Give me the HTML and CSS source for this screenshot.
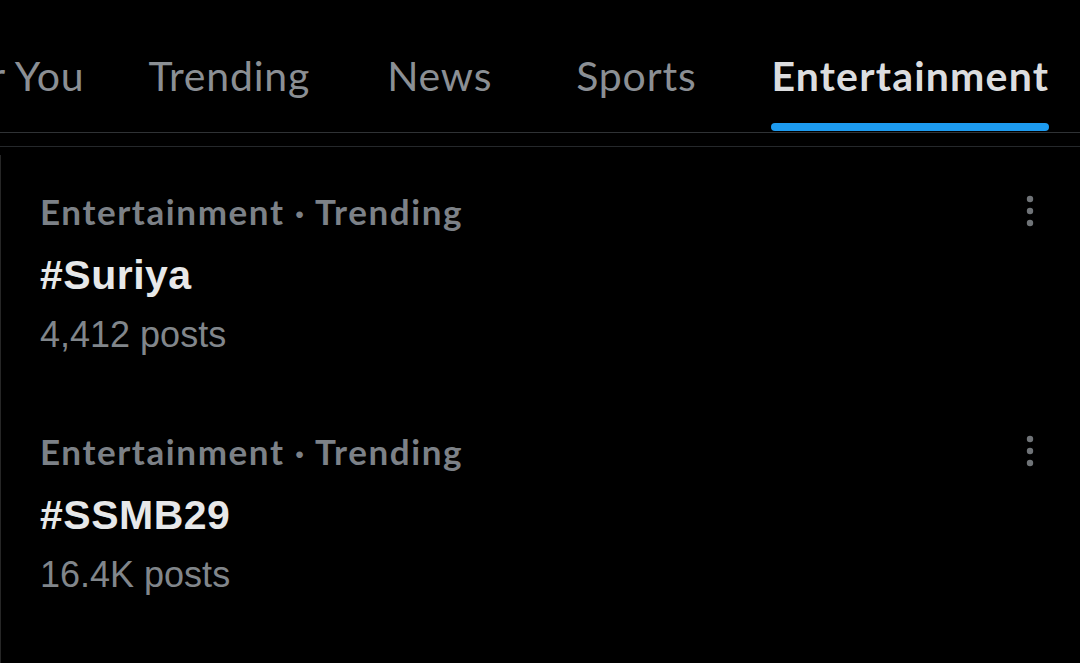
FILE: index.html
```html
<!DOCTYPE html>
<html>
<head>
<meta charset="utf-8">
<link rel="stylesheet" href="styles.css">
</head>
<body>
<div class="page">
  <nav class="tabs">
    <div class="tab-strip">
      <div class="tab tab-foryou"><span class="tab-label">For You</span></div>
      <div class="tab tab-trending"><span class="tab-label">Trending</span></div>
      <div class="tab tab-news"><span class="tab-label">News</span></div>
      <div class="tab tab-sports"><span class="tab-label">Sports</span></div>
      <div class="tab tab-ent active"><span class="tab-label">Entertainment</span><span class="indicator"></span></div>
    </div>
  </nav>
  <div class="sub-rule"></div>
  <section class="list">
    <article class="trend">
      <div class="trend-body">
        <div class="trend-meta">Entertainment · Trending</div>
        <div class="trend-title">#Suriya</div>
        <div class="trend-count">4,412 posts</div>
      </div>
      <svg class="more" viewBox="0 0 8 40" width="8" height="40"><circle cx="4" cy="8" r="3.2"/><circle cx="4" cy="20" r="3.2"/><circle cx="4" cy="32" r="3.2"/></svg>
    </article>
    <article class="trend">
      <div class="trend-body">
        <div class="trend-meta">Entertainment · Trending</div>
        <div class="trend-title">#SSMB29</div>
        <div class="trend-count">16.4K posts</div>
      </div>
      <svg class="more" viewBox="0 0 8 40" width="8" height="40"><circle cx="4" cy="8" r="3.2"/><circle cx="4" cy="20" r="3.2"/><circle cx="4" cy="32" r="3.2"/></svg>
    </article>
  </section>
</div>
</body>
</html>
```

FILE: styles.css
```css
html, body {
  margin: 0;
  padding: 0;
  background: #000;
}
.page {
  width: 1080px;
  height: 663px;
  overflow: hidden;
  background: #000;
  display: flex;
  flex-direction: column;
}
.tabs {
  flex: none;
  height: 132px;
  border-bottom: 1px solid #2f3235;
  overflow: hidden;
}
.tab-strip {
  display: flex;
  margin-left: -59px;
  height: 132px;
}
.tab {
  display: flex;
  flex-direction: column;
  align-items: stretch;
  padding: 52px 3px 0;
  font-family: Lato, "Liberation Sans", sans-serif;
  font-size: 41px;
  letter-spacing: 0.8px;
  line-height: 48px;
  color: #8b8f94;
  white-space: nowrap;
}
.tab-trending { margin-left: 58px; }
.tab-news { margin-left: 71px; }
.tab-sports { margin-left: 78px; }
.tab-ent { margin-left: 69px; }
.tab.active {
  color: #dcdddf;
  font-weight: 700;
  letter-spacing: 1.2px;
}
.indicator {
  display: block;
  height: 8px;
  margin-top: 23px;
  border-radius: 4px;
  background: #1d9bf0;
}
.sub-rule {
  flex: none;
  height: 13px;
  border-bottom: 1px solid #25282b;
}
.list {
  flex: 1;
  margin-top: 8px;
  border-left: 1px solid #262626;
}
.trend {
  display: flex;
  align-items: flex-start;
  padding: 36px 46px 36px 39px;
}
.trend-body {
  flex: 1;
}
.trend-meta {
  font-family: Lato, "Liberation Sans", sans-serif;
  font-weight: 700;
  font-size: 35px;
  letter-spacing: 1.6px;
  line-height: 40px;
  color: #7c8187;
}
.trend-title {
  margin-top: 20px;
  font-family: "Liberation Sans", Arial, sans-serif;
  font-weight: 700;
  font-size: 41px;
  letter-spacing: 0.5px;
  line-height: 48px;
  color: #e7e8e9;
}
.trend-count {
  margin-top: 12px;
  font-family: "Liberation Sans", Arial, sans-serif;
  font-size: 36px;
  line-height: 48px;
  color: #81868b;
}
.more {
  flex: none;
  fill: #6f7377;
}
```
